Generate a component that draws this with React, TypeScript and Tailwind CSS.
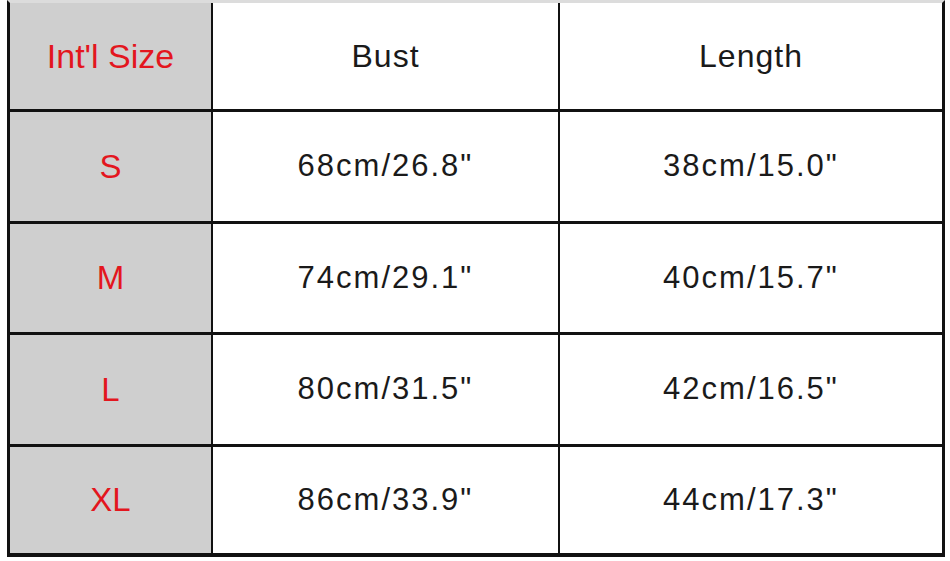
const rows = [
  { size: "S", bust: '68cm/26.8"', length: '38cm/15.0"', h: "h-[112px] border-b-[3px]" },
  { size: "M", bust: '74cm/29.1"', length: '40cm/15.7"', h: "h-[111px] border-b-[3px]" },
  { size: "L", bust: '80cm/31.5"', length: '42cm/16.5"', h: "h-[112px] border-b-[3px]" },
  { size: "XL", bust: '86cm/33.9"', length: '44cm/17.3"', h: "h-[106px]" },
];

export default function App() {
  return (
    <div className="h-[561px] w-[950px] bg-white pl-[7px]" style={{ fontFamily: '"Liberation Sans", Arial, sans-serif' }}>
      <div className="grid w-[938px] grid-cols-[203px_347px_1fr] border-t-[3px] border-l-[3px] border-r-[3px] border-b-[4px] border-t-[#dcdcdc] border-l-[#111] border-r-[#111] border-b-[#111]">
        <div className="flex h-[109px] items-center justify-center border-r-2 border-b-[3px] border-[#111] bg-[#cfcfcf] text-[34px] text-[#e3161e]">
          Int'l Size
        </div>
        <div className="flex h-[109px] items-center justify-center border-r-2 border-b-[3px] border-[#111] text-[32px] tracking-[1px] text-[#1a1a1a]">
          Bust
        </div>
        <div className="flex h-[109px] items-center justify-center border-b-[3px] border-[#111] text-[32px] tracking-[1px] text-[#1a1a1a]">
          Length
        </div>
        {rows.map((r) => (
          <div key={r.size} className="contents">
            <div className={`flex items-center justify-center border-r-2 border-[#111] bg-[#cfcfcf] text-[33px] text-[#e3161e] ${r.h}`}>
              {r.size}
            </div>
            <div className={`flex items-center justify-center border-r-2 border-[#111] text-[31px] tracking-[2px] text-[#1a1a1a] ${r.h}`}>
              {r.bust}
            </div>
            <div className={`flex items-center justify-center border-[#111] text-[31px] tracking-[2px] text-[#1a1a1a] ${r.h}`}>
              {r.length}
            </div>
          </div>
        ))}
      </div>
    </div>
  );
}
